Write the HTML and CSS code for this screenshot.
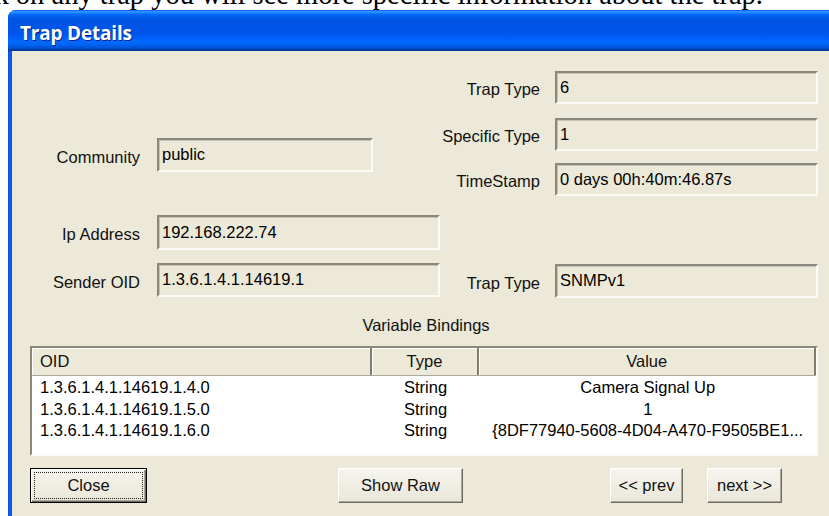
FILE: index.html
```html
<!DOCTYPE html>
<html>
<head>
<meta charset="utf-8">
<title>Trap Details</title>
<link rel="stylesheet" href="styles.css">
</head>
<body>
<div class="caption"><p>Click on any trap you will see more specific information about the trap.</p></div>

<div class="window">
  <div class="titlebar"><span class="title">Trap Details</span></div>
  <div class="client">
    <div class="fields">
      <div class="col col-left">
        <div class="row row-community">
          <span class="label">Community</span>
          <div class="field field-short">public</div>
        </div>
        <div class="row row-ip">
          <span class="label">Ip Address</span>
          <div class="field field-long">192.168.222.74</div>
        </div>
        <div class="row row-sender">
          <span class="label">Sender OID</span>
          <div class="field field-long">1.3.6.1.4.1.14619.1</div>
        </div>
      </div>
      <div class="col col-right">
        <div class="row">
          <span class="label">Trap Type</span>
          <div class="field field-right">6</div>
        </div>
        <div class="row row-specific">
          <span class="label">Specific Type</span>
          <div class="field field-right">1</div>
        </div>
        <div class="row row-time">
          <span class="label">TimeStamp</span>
          <div class="field field-right">0 days 00h:40m:46.87s</div>
        </div>
        <div class="row row-version">
          <span class="label">Trap Type</span>
          <div class="field field-right">SNMPv1</div>
        </div>
      </div>
    </div>

    <div class="bindings-title">Variable Bindings</div>

    <div class="list">
      <div class="list-head">
        <div class="hcell c-oid">OID</div>
        <div class="hcell c-type">Type</div>
        <div class="hcell c-value">Value</div>
      </div>
      <div class="list-body">
        <div class="lrow">
          <div class="cell c-oid">1.3.6.1.4.1.14619.1.4.0</div>
          <div class="cell c-type">String</div>
          <div class="cell c-value">Camera Signal Up</div>
        </div>
        <div class="lrow">
          <div class="cell c-oid">1.3.6.1.4.1.14619.1.5.0</div>
          <div class="cell c-type">String</div>
          <div class="cell c-value">1</div>
        </div>
        <div class="lrow">
          <div class="cell c-oid">1.3.6.1.4.1.14619.1.6.0</div>
          <div class="cell c-type">String</div>
          <div class="cell c-value">{8DF77940-5608-4D04-A470-F9505BE1...</div>
        </div>
      </div>
    </div>

    <div class="buttons">
      <button class="btn btn-default btn-close"><span class="focus">Close</span></button>
      <button class="btn btn-raw">Show Raw</button>
      <button class="btn btn-prev">&lt;&lt; prev</button>
      <button class="btn btn-next">next &gt;&gt;</button>
    </div>
  </div>
</div>
</body>
</html>
```

FILE: styles.css
```css
html, body {
  margin: 0;
  padding: 0;
}

body {
  width: 829px;
  height: 516px;
  overflow: hidden;
  background: #ffffff;
  font-family: "Liberation Sans", Arial, sans-serif;
  font-size: 16.5px;
  color: #111;
}

/* document line above the dialog, only its lower part shows */
.caption {
  height: 10px;
  overflow: hidden;
  white-space: nowrap;
}

.caption p {
  margin: -19px 0 0 -53px;
  font-family: "Liberation Serif", "Times New Roman", serif;
  font-size: 28.5px;
  line-height: 28.5px;
  color: #000;
}

/* XP style dialog window */
.window {
  margin-left: 8px;
  width: 880px;
  height: 506px;
  display: flex;
  flex-direction: column;
  border-radius: 8px 8px 0 0;
  overflow: hidden;
  background: linear-gradient(to right, #0831D9 0, #166AEE 1px, #0055EA 3px);
}

.titlebar {
  flex: none;
  height: 41px;
  box-sizing: border-box;
  padding: 4px 0 0 12px;
  display: flex;
  align-items: center;
  background: linear-gradient(to bottom,
    #0058EE 0%, #3593FF 4%, #288EFF 6%, #127DFF 8%, #036FFC 10%,
    #0262EE 14%, #0057E5 20%, #0054E3 24%, #0055EB 56%, #005BF5 66%,
    #026AFE 76%, #0062EF 86%, #0052D6 92%, #0040AB 97%, #003092 100%);
}

.title {
  font-family: "Open Sans", "DejaVu Sans", sans-serif;
  font-weight: 700;
  font-size: 19px;
  letter-spacing: -0.2px;
  color: #ffffff;
  text-shadow: 1px 1px 0 #0A1E80;
}

.client {
  flex: 1;
  margin-left: 4px;
  background: #ECE9D8;
}

/* upper block of read-only fields */
.fields {
  display: flex;
  padding-top: 20px;
}

.col {
  display: flex;
  flex-direction: column;
}

.col-left {
  width: 428px;
  padding-top: 67px;
}

.row {
  display: flex;
  align-items: center;
}

.label {
  box-sizing: border-box;
  text-align: right;
  white-space: nowrap;
  padding-top: 4px;
  color: #111;
}

.col-left .label {
  width: 128px;
  margin-right: 17px;
}

.col-right .label {
  width: 100px;
  margin-right: 15px;
}

.field {
  box-sizing: border-box;
  height: 33px;
  display: flex;
  align-items: center;
  padding: 0 0 1px 3px;
  white-space: nowrap;
  background: #ECE9D8;
  border-style: solid;
  border-width: 2px 2px 2px 2px;
  border-color: #8A877C #FBFAF6 #FBFAF6 #8A877C;
  box-shadow: inset 1px 1px 0 #C5C2B4;
  color: #000;
}

.field-short { width: 216px; height: 34px; }
.field-long  { width: 283px; height: 35px; }
.field-right { width: 263px; }

.row-ip     { margin-top: 43px; }
.row-sender { margin-top: 13px; }
.row-sender .field { height: 34px; }

.row-specific { margin-top: 14px; }
.row-time     { margin-top: 12px; }
.row-version  { margin-top: 68px; }
.row-version .field { height: 34px; }

.bindings-title {
  width: 788px;
  box-sizing: border-box;
  margin: 17px 0 0 18px;
  padding-left: 4px;
  text-align: center;
  line-height: 20px;
  color: #111;
}

/* list view with report columns */
.list {
  box-sizing: border-box;
  width: 788px;
  height: 110px;
  margin: 11px 0 0 18px;
  background: #ffffff;
  border-style: solid;
  border-width: 2px;
  border-color: #8A877C #FBFAF6 #FBFAF6 #8A877C;
  overflow: hidden;
}

.list-head {
  display: flex;
  height: 27px;
  background: #ECE9D8;
  border-bottom: 1px solid #ACA899;
}

.hcell {
  box-sizing: border-box;
  height: 27px;
  line-height: 26px;
  border-right: 2px solid #7F7D72;
  box-shadow: inset 1px 1px 0 #ffffff;
  white-space: nowrap;
  color: #111;
}

.c-oid   { width: 340px; padding-left: 8px; text-align: left; }
.c-type  { width: 108px; text-align: center; }
.c-value { width: 337px; text-align: center; }

.list-body {
  padding-top: 1px;
}

.lrow {
  display: flex;
  height: 21.5px;
  line-height: 21.5px;
}

.cell {
  box-sizing: border-box;
  white-space: nowrap;
  overflow: hidden;
  color: #000;
}

/* push buttons */
.buttons {
  display: flex;
  margin-top: 12px;
}

.btn {
  box-sizing: border-box;
  height: 35px;
  padding: 0;
  font-family: "Liberation Sans", Arial, sans-serif;
  font-size: 16.5px;
  color: #111;
  background: linear-gradient(to bottom, #F5F4EE, #EAE7D9);
  border: 1px solid;
  border-color: #ffffff #6E6C61 #6E6C61 #ffffff;
  box-shadow: inset -1px -1px 0 #ACA899;
}

.btn-default {
  display: flex;
  padding: 3px;
  border: 1px solid #000;
  box-shadow: inset 1px 1px 0 #ffffff, inset -1px -1px 0 #6E6C61, inset -2px -2px 0 #ACA899;
}

.focus {
  flex: 1;
  display: flex;
  align-items: center;
  justify-content: center;
  border: 1px dotted #222;
}

.btn-close { width: 117px; margin-left: 18px; }
.btn-raw   { width: 125px; margin-left: 191px; }
.btn-prev  { width: 73px;  margin-left: 147px; }
.btn-next  { width: 75px;  margin-left: 24px; }
```
